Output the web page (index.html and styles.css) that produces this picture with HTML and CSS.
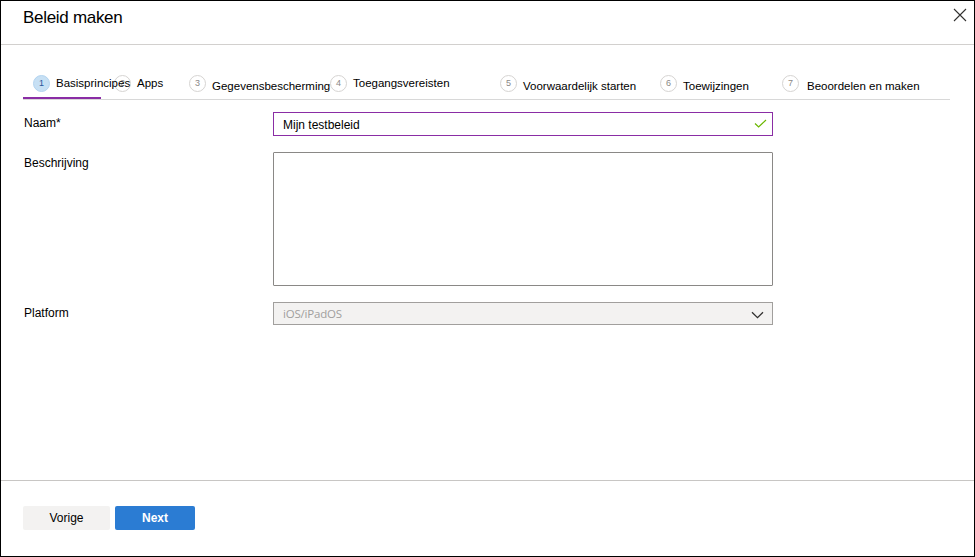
FILE: index.html
```html
<!DOCTYPE html>
<html lang="nl">
<head>
<meta charset="utf-8">
<title>Beleid maken</title>
<link rel="stylesheet" href="styles.css">
</head>
<body>
<div class="dialog">
  <header class="header">
    <h1 class="title">Beleid maken</h1>
    <button class="close" aria-label="Sluiten">
      <svg width="14" height="14" viewBox="0 0 14 14"><path d="M1 1 L13 13 M13 1 L1 13" stroke="#323130" stroke-width="1.1" fill="none"/></svg>
    </button>
  </header>

  <nav class="tabs">
    <div class="tab tab-1 active"><span class="num">1</span><span class="label">Basisprincipes</span></div>
    <div class="tab tab-2"><span class="num">2</span><span class="label">Apps</span></div>
    <div class="tab tab-3"><span class="num">3</span><span class="label low">Gegevensbescherming</span></div>
    <div class="tab tab-4"><span class="num">4</span><span class="label">Toegangsvereisten</span></div>
    <div class="tab tab-5"><span class="num">5</span><span class="label low">Voorwaardelijk starten</span></div>
    <div class="tab tab-6"><span class="num">6</span><span class="label low">Toewijzingen</span></div>
    <div class="tab tab-7"><span class="num">7</span><span class="label low">Beoordelen en maken</span></div>
  </nav>

  <main class="form">
    <div class="field-label">Naam*</div>
    <div class="input valid">
      <span class="value">Mijn testbeleid</span>
      <svg class="check" width="13" height="9" viewBox="0 0 13 9"><path d="M1 4.5 L4.6 8 L12 1" stroke="#6bb700" stroke-width="1.2" fill="none"/></svg>
    </div>

    <div class="field-label">Beschrijving</div>
    <div class="textarea"></div>

    <div class="field-label">Platform</div>
    <div class="select">
      <span class="value">iOS/iPadOS</span>
      <svg class="chev" width="13" height="8" viewBox="0 0 13 8"><path d="M1 1.2 L6.5 6.6 L12 1.2" stroke="#323130" stroke-width="1.3" fill="none"/></svg>
    </div>
  </main>

  <footer class="footer">
    <button class="btn btn-secondary">Vorige</button>
    <button class="btn btn-primary">Next</button>
  </footer>
</div>
</body>
</html>
```

FILE: styles.css
```css
* { box-sizing: border-box; }

html, body {
  margin: 0;
  padding: 0;
  background: #ffffff;
}

body {
  font-family: "Liberation Sans", Arial, sans-serif;
  color: #000000;
}

.dialog {
  width: 975px;
  height: 557px;
  border: 1px solid #000000;
  display: flex;
  flex-direction: column;
  background: #ffffff;
}

.header {
  height: 44px;
  border-bottom: 1px solid #d2d0ce;
  display: flex;
  justify-content: space-between;
  align-items: flex-start;
  flex: none;
}

.title {
  margin: 0;
  padding: 7px 0 0 22px;
  font-size: 17px;
  line-height: 20px;
  font-weight: normal;
  letter-spacing: -0.3px;
  color: #000000;
}

.close {
  margin: 7px 7px 0 0;
  padding: 0;
  border: 0;
  background: transparent;
  width: 14px;
  height: 14px;
  display: flex;
}

.tabs {
  flex: none;
  margin: 30px 24px 0 22px;
  display: flex;
  border-bottom: 1px solid #d8d8d8;
  height: 25px;
  font-size: 11.5px;
  line-height: 17px;
}

.tab {
  flex: none;
  display: flex;
  align-items: flex-start;
  gap: 6px;
  white-space: nowrap;
  height: 24px;
}

.tab-1 { width: 78px; padding-left: 10px; position: relative; z-index: 1; }
.tab-2 { width: 75px; margin-left: 13px; }
.tab-3 { width: 141px; }
.tab-4 { width: 170px; }
.tab-5 { width: 160px; }
.tab-6 { width: 122px; }
.tab-7 { width: 140px; gap: 8px; }

.tab.active {
  border-bottom: 2px solid #8a2da5;
}

.num {
  flex: none;
  width: 17px;
  height: 17px;
  border-radius: 50%;
  border: 1px solid #d6d4d2;
  background: transparent;
  color: #8a8886;
  font-size: 9px;
  line-height: 15px;
  text-align: center;
}

.tab.active .num {
  background: #c7e0f4;
  border-color: #b3d4f0;
  color: #2b579a;
}

.label {
  color: #000000;
}

.label.low {
  padding-top: 3px;
}

.form {
  flex: 1;
  display: grid;
  grid-template-columns: 249px 500px;
  grid-auto-rows: min-content;
  row-gap: 16px;
  padding: 12px 0 0 23px;
  font-size: 12px;
  align-content: start;
}

.field-label {
  padding-top: 4px;
  line-height: 15px;
  color: #000000;
}

.input {
  height: 24px;
  border: 1px solid #8a2da5;
  display: flex;
  align-items: center;
  justify-content: space-between;
  padding: 0 5px 0 9px;
}

.input .value {
  padding-top: 2px;
  color: #000000;
}

.check {
  margin-top: -2px;
}

.textarea {
  height: 134px;
  border: 1px solid #8a8886;
  border-radius: 1px;
}

.select {
  height: 23px;
  border: 1px solid #a19f9d;
  background: #f3f2f1;
  display: flex;
  align-items: center;
  justify-content: space-between;
  padding: 0 8px 0 9px;
}

.select .value {
  color: #a19f9d;
  font-family: "Open Sans", "Liberation Sans", sans-serif;
  font-size: 11.5px;
  letter-spacing: -0.2px;
}

.chev {
  margin-top: 2px;
}

.footer {
  flex: none;
  height: 76px;
  border-top: 1px solid #c8c6c4;
  display: flex;
  align-items: flex-start;
  gap: 5px;
  padding: 25px 0 0 22px;
}

.btn {
  height: 24px;
  border: 0;
  border-radius: 2px;
  font-family: "Liberation Sans", Arial, sans-serif;
  font-size: 12px;
  padding: 0;
  cursor: pointer;
}

.btn-secondary {
  width: 87px;
  background: #f3f2f1;
  color: #000000;
}

.btn-primary {
  width: 80px;
  background: #2b7cd3;
  color: #ffffff;
  font-weight: bold;
}
```
